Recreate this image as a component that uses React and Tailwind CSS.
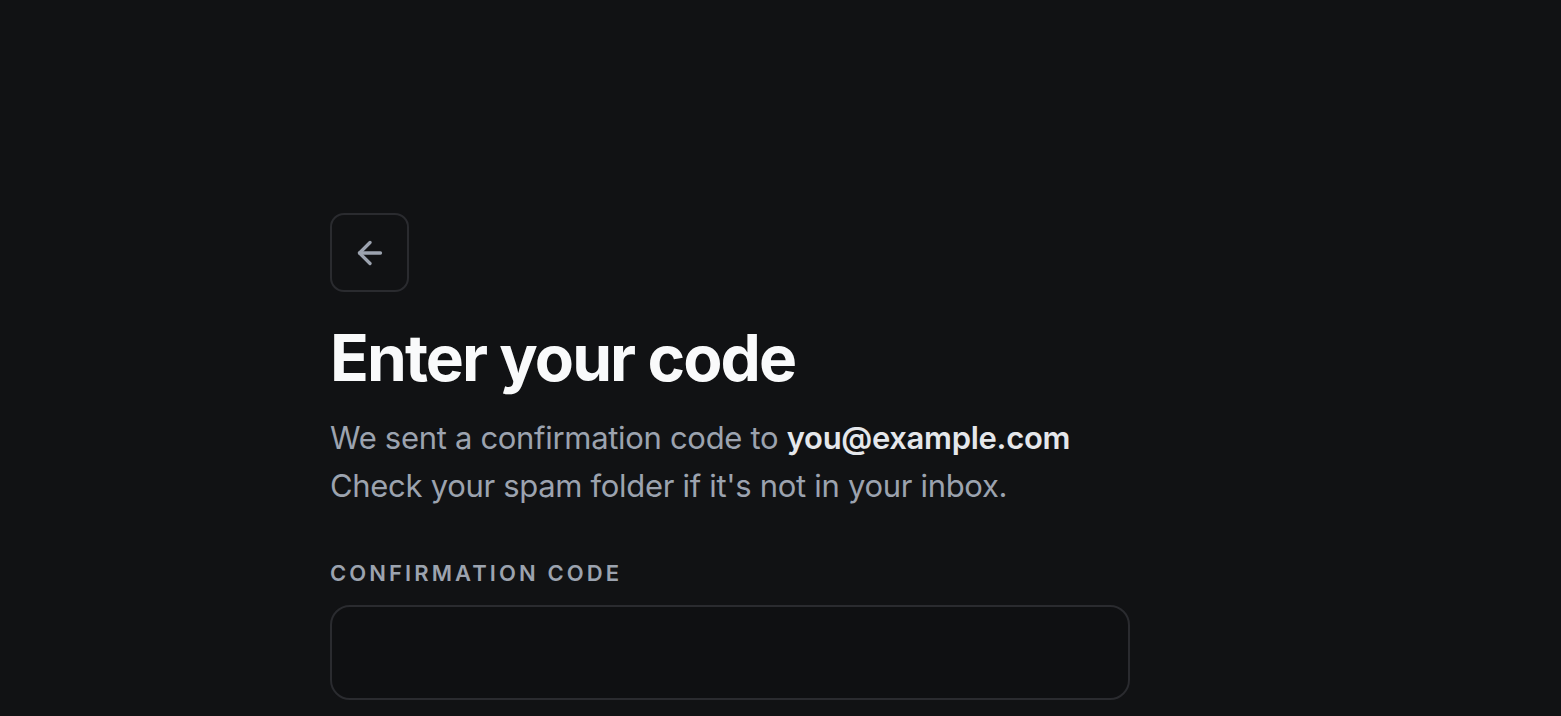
import { ArrowLeft } from "lucide-react";

export default function App() {
  return (
    <div className="min-h-screen bg-[#111214] font-['Inter',sans-serif] text-white">
      <div className="w-[800px] ml-[330px] pt-[213px]">
        <button
          type="button"
          className="w-[79px] h-[79px] flex items-center justify-center rounded-[14px] border-2 border-[#2a2b2f] text-[#9ca3af]"
        >
          <ArrowLeft size={36} strokeWidth={2.2} />
        </button>

        <h1 className="mt-[26px] text-[64px] leading-[80px] font-bold tracking-[-0.03em] text-[#f9fafb]">
          Enter your code
        </h1>

        <p className="mt-[16px] text-[31px] leading-[48px] tracking-[-0.01em] text-[#9ca3af]">
          We sent a confirmation code to{" "}
          <span className="font-semibold text-[#e5e7eb]">you@example.com</span>
          <br />
          Check your spam folder if it's not in your inbox.
        </p>

        <label className="block mt-[49px] text-[22px] leading-[28px] font-semibold tracking-[0.14em] text-[#9ca3af]">
          CONFIRMATION CODE
        </label>
        <input
          type="text"
          className="mt-[18px] w-[800px] h-[95px] rounded-[20px] border-2 border-[#2a2b2f] bg-[#0f1012] px-6 text-[28px] text-white outline-none"
        />
      </div>
    </div>
  );
}
